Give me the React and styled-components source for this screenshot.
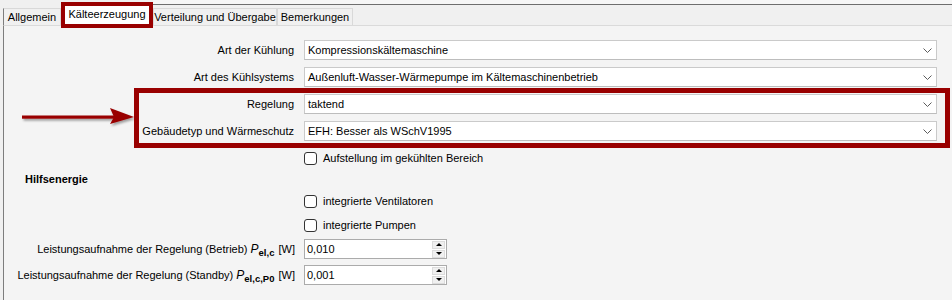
import React from 'react'
import styled, { createGlobalStyle } from 'styled-components'

const Global = createGlobalStyle`
html, body {
  margin: 0;
  padding: 0;
  background: #f0f0f0;
}
body {
  font-family: "Liberation Sans", Arial, sans-serif;
  font-size: 11px;
  color: #000;
}
`

const tabs = [
  { label: 'Allgemein', width: 58, first: true },
  { label: 'Kälteerzeugung', width: 84, active: true },
  { label: 'Verteilung und Übergabe', width: 124 },
  { label: 'Bemerkungen', width: 76 },
]

const Chevron = () => (
  <svg width="9" height="5" viewBox="0 0 9 5">
    <polyline points="0.5,0.5 4.5,4.5 8.5,0.5" fill="none" stroke="#5c5c5c" strokeWidth="1" />
  </svg>
)

const Arrow = () => (
  <svg width="130" height="60" viewBox="0 0 130 60">
    <defs>
      <filter id="shadow" x="-10%" y="-50%" width="130%" height="200%">
        <feDropShadow dx="1.5" dy="2" stdDeviation="1.2" floodColor="#000" floodOpacity="0.35" />
      </filter>
    </defs>
    <g filter="url(#shadow)" fill="#990000">
      <rect x="18" y="27.5" width="92" height="3.2" />
      <polygon points="106,20 130,29 106,36 110,29" />
    </g>
  </svg>
)

const Combo = ({ value }) => (
  <ComboBox>
    <span>{value}</span>
    <Chevron />
  </ComboBox>
)

const Spin = ({ value }) => (
  <NumberBox>
    <span>{value}</span>
    <Spinner>
      <SpinButton><TriUp /></SpinButton>
      <SpinButton><TriDown /></SpinButton>
    </Spinner>
  </NumberBox>
)

const App = () => {
  return (
    <Page>
      <Global />
      <TabStrip>
        {tabs.map((t) => (
          <Tab key={t.label} $width={t.width} $active={t.active} $first={t.first}>
            {t.label}
          </Tab>
        ))}
      </TabStrip>
      <Panel>
        <Form>
          <Row $top={14}>
            <Label $width={290}>Art der Kühlung</Label>
            <Combo value="Kompressionskältemaschine" />
          </Row>
          <Row $top={7}>
            <Label $width={290}>Art des Kühlsystems</Label>
            <Combo value="Außenluft-Wasser-Wärmepumpe im Kältemaschinenbetrieb" />
          </Row>
          <GroupRow>
            <ArrowSlot><Arrow /></ArrowSlot>
            <Highlight>
              <Row $top={0}>
                <Label $width={155}>Regelung</Label>
                <Combo value="taktend" />
              </Row>
              <Row $top={7}>
                <Label $width={155}>Gebäudetyp und Wärmeschutz</Label>
                <Combo value="EFH: Besser als WSchV1995" />
              </Row>
            </Highlight>
          </GroupRow>
          <CheckRow $top={2}>
            <Check />
            <span>Aufstellung im gekühlten Bereich</span>
          </CheckRow>
          <Heading>Hilfsenergie</Heading>
          <CheckRow $top={6}>
            <Check />
            <span>integrierte Ventilatoren</span>
          </CheckRow>
          <CheckRow $top={8}>
            <Check />
            <span>integrierte Pumpen</span>
          </CheckRow>
          <Row $top={6}>
            <Label $width={291} $gap={9}>
              Leistungsaufnahme der Regelung (Betrieb) <Sym>P</Sym><Sub>el,c</Sub> [W]
            </Label>
            <Spin value="0,010" />
          </Row>
          <Row $top={6}>
            <Label $width={291} $gap={9}>
              Leistungsaufnahme der Regelung (Standby) <Sym>P</Sym><Sub>el,c,P0</Sub> [W]
            </Label>
            <Spin value="0,001" />
          </Row>
        </Form>
      </Panel>
    </Page>
  )
}

const Page = styled.div`
width: 952px;
height: 300px;
display: flex;
flex-direction: column;
overflow: hidden;
background: #f0f0f0;
`
const TabStrip = styled.div`
position: relative;
height: 25px;
flex: 0 0 25px;
display: flex;
align-items: flex-start;
padding-left: 3px;

&::before {
  content: '';
  position: absolute;
  left: 153px;
  right: 0;
  top: 0;
  height: 4px;
  background: #f6f6f6;
  border-bottom: 1px solid #6e6e6e;
}
`
const Tab = styled.div`
position: relative;
box-sizing: border-box;
width: ${(p) => p.$width}px;
height: ${(p) => (p.$active ? 18 : 17)}px;
margin-top: ${(p) => (p.$active ? 6 : 8)}px;
margin-left: ${(p) => (p.$active ? 4 : 0)}px;
margin-right: ${(p) => (p.$active ? 4 : 0)}px;
display: flex;
align-items: center;
justify-content: center;
padding-bottom: ${(p) => (p.$active ? 2 : 0)}px;
background: ${(p) => (p.$active ? '#ffffff' : '#f0f0f0')};
border: ${(p) => (p.$active ? 'none' : '1px solid #d9d9d9')};
border-bottom: none;
border-left-color: ${(p) => (p.$first ? '#7d7d7d' : '#d9d9d9')};
outline: ${(p) => (p.$active ? '4px solid #990000' : 'none')};
z-index: ${(p) => (p.$active ? 2 : 1)};
white-space: nowrap;
`
const Panel = styled.div`
flex: 1;
margin-left: 3px;
border-left: 1px solid #7d7d7d;
border-top: 1px solid #dadada;
background: #f4f4f4;
`
const Form = styled.div`
display: flex;
flex-direction: column;
padding-right: 15px;
`
const Row = styled.div`
display: flex;
align-items: center;
margin-top: ${(p) => p.$top}px;
`
const Label = styled.div`
flex: 0 0 ${(p) => p.$width}px;
margin-right: ${(p) => p.$gap || 10}px;
text-align: right;
white-space: nowrap;
`
const ComboBox = styled.div`
flex: 1;
box-sizing: border-box;
height: 20px;
display: flex;
align-items: center;
justify-content: space-between;
padding: 0 4px 0 3px;
background: #ffffff;
border: 1px solid #cacaca;
border-bottom-color: #bdbdbd;
white-space: nowrap;
`
const GroupRow = styled.div`
display: flex;
align-items: center;
margin-top: 1px;
margin-right: -13px;
`
const ArrowSlot = styled.div`
flex: 0 0 130px;
height: 60px;
display: flex;
align-items: center;
`
const Highlight = styled.div`
flex: 1;
box-sizing: border-box;
height: 60px;
border: 5px solid #990000;
padding: 1px 8px 0 0;
`
const CheckRow = styled.div`
display: flex;
align-items: center;
height: 16px;
margin-top: ${(p) => p.$top}px;
margin-left: 300px;
`
const Check = styled.span`
box-sizing: border-box;
width: 13px;
height: 13px;
margin-right: 6px;
border: 1px solid #333333;
border-radius: 3px;
background: #ffffff;
`
const Heading = styled.div`
height: 16px;
line-height: 16px;
margin-top: 5px;
padding-left: 21px;
font-weight: bold;
`
const Sym = styled.i`
font-family: "Liberation Sans", Arial, sans-serif;
font-size: 12px;
`
const Sub = styled.sub`
font-size: 9.5px;
font-weight: bold;
vertical-align: -3px;
line-height: 0;
margin-right: 1px;
`
const NumberBox = styled.div`
box-sizing: border-box;
width: 143px;
height: 20px;
display: flex;
align-items: center;
justify-content: space-between;
padding-left: 2px;
background: #ffffff;
border: 1px solid #ababab;
`
const Spinner = styled.div`
display: flex;
flex-direction: column;
gap: 1px;
margin-right: 1px;
`
const SpinButton = styled.div`
box-sizing: border-box;
width: 13px;
height: 8px;
display: flex;
align-items: center;
justify-content: center;
background: #f0f0f0;
border: 1px solid #dcdcdc;
`
const TriUp = styled.span`
width: 0;
height: 0;
border-left: 3px solid transparent;
border-right: 3px solid transparent;
border-bottom: 3px solid #000;
`
const TriDown = styled.span`
width: 0;
height: 0;
border-left: 3px solid transparent;
border-right: 3px solid transparent;
border-top: 3px solid #000;
`

export default App
